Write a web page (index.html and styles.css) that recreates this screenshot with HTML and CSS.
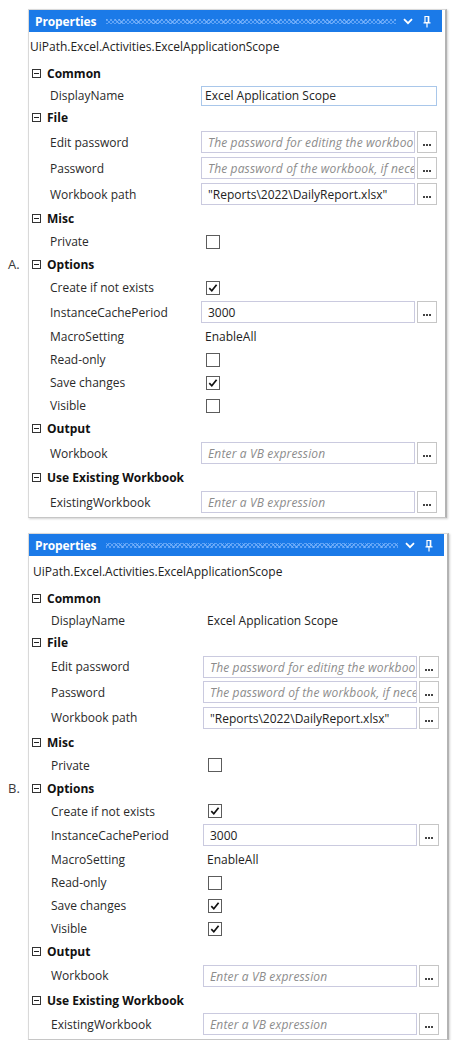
FILE: index.html
```html
<!DOCTYPE html>
<html>
<head>
<meta charset="utf-8">
<link rel="stylesheet" href="styles.css">
</head>
<body>
<div class="page">

  <div class="panel panel-a">
    <div class="titlebar">
      <span class="title">Properties</span>
      <span class="grip"></span>
      <svg class="chev" width="10" height="7" viewBox="0 0 10 7"><path d="M1 1.2 5 5.2 9 1.2" fill="none" stroke="#fff" stroke-width="1.8"/></svg>
      <svg class="pin" width="8" height="13" viewBox="0 0 8 13"><path d="M2 1.5h3.5v6H2z" fill="none" stroke="#fff" stroke-width="1.2"/><path d="M5.5 1v7" stroke="#fff" stroke-width="1.6"/><path d="M0.5 7.8h7M4 8v4.5" stroke="#fff" stroke-width="1.2"/></svg>
    </div>
    <div class="typename">UiPath.Excel.Activities.ExcelApplicationScope</div>

    <div class="cat"><svg class="tog" width="9" height="9" viewBox="0 0 9 9"><rect x="0.5" y="0.5" width="8" height="8" fill="#fff" stroke="#333"/><path d="M2 4.5h5" stroke="#222"/></svg>Common</div>
    <div class="prop short"><span class="lbl">DisplayName</span><div class="val"><div class="field focus">Excel Application Scope</div></div></div>

    <div class="cat"><svg class="tog" width="9" height="9" viewBox="0 0 9 9"><rect x="0.5" y="0.5" width="8" height="8" fill="#fff" stroke="#333"/><path d="M2 4.5h5" stroke="#222"/></svg>File</div>
    <div class="prop in"><span class="lbl">Edit password</span><div class="val"><div class="field ph">The password for editing the workboo</div><div class="btn"><svg width="8" height="2" viewBox="0 0 8 2"><path d="M0 0h2v2H0zM3 0h2v2H3zM6 0h2v2H6z" fill="#444"/></svg></div></div></div>
    <div class="prop in"><span class="lbl">Password</span><div class="val"><div class="field ph">The password of the workbook, if nece</div><div class="btn"><svg width="8" height="2" viewBox="0 0 8 2"><path d="M0 0h2v2H0zM3 0h2v2H3zM6 0h2v2H6z" fill="#444"/></svg></div></div></div>
    <div class="prop in"><span class="lbl">Workbook path</span><div class="val"><div class="field">"Reports\2022\DailyReport.xlsx"</div><div class="btn"><svg width="8" height="2" viewBox="0 0 8 2"><path d="M0 0h2v2H0zM3 0h2v2H3zM6 0h2v2H6z" fill="#444"/></svg></div></div></div>

    <div class="cat"><svg class="tog" width="9" height="9" viewBox="0 0 9 9"><rect x="0.5" y="0.5" width="8" height="8" fill="#fff" stroke="#333"/><path d="M2 4.5h5" stroke="#222"/></svg>Misc</div>
    <div class="prop"><span class="lbl">Private</span><div class="val"><span class="cb"></span></div></div>

    <div class="cat"><span class="marker">A.</span><svg class="tog" width="9" height="9" viewBox="0 0 9 9"><rect x="0.5" y="0.5" width="8" height="8" fill="#fff" stroke="#333"/><path d="M2 4.5h5" stroke="#222"/></svg>Options</div>
    <div class="prop"><span class="lbl">Create if not exists</span><div class="val"><span class="cb"><svg width="12" height="12" viewBox="0 0 12 12"><path d="M2.3 6.2 4.8 8.8 9.6 2.8" fill="none" stroke="#111" stroke-width="1.7"/></svg></span></div></div>
    <div class="prop in"><span class="lbl">InstanceCachePeriod</span><div class="val"><div class="field">3000</div><div class="btn"><svg width="8" height="2" viewBox="0 0 8 2"><path d="M0 0h2v2H0zM3 0h2v2H3zM6 0h2v2H6z" fill="#444"/></svg></div></div></div>
    <div class="prop"><span class="lbl">MacroSetting</span><div class="val"><span class="txt">EnableAll</span></div></div>
    <div class="prop"><span class="lbl">Read-only</span><div class="val"><span class="cb"></span></div></div>
    <div class="prop"><span class="lbl">Save changes</span><div class="val"><span class="cb"><svg width="12" height="12" viewBox="0 0 12 12"><path d="M2.3 6.2 4.8 8.8 9.6 2.8" fill="none" stroke="#111" stroke-width="1.7"/></svg></span></div></div>
    <div class="prop"><span class="lbl">Visible</span><div class="val"><span class="cb"></span></div></div>

    <div class="cat"><svg class="tog" width="9" height="9" viewBox="0 0 9 9"><rect x="0.5" y="0.5" width="8" height="8" fill="#fff" stroke="#333"/><path d="M2 4.5h5" stroke="#222"/></svg>Output</div>
    <div class="prop in"><span class="lbl">Workbook</span><div class="val"><div class="field ph">Enter a VB expression</div><div class="btn"><svg width="8" height="2" viewBox="0 0 8 2"><path d="M0 0h2v2H0zM3 0h2v2H3zM6 0h2v2H6z" fill="#444"/></svg></div></div></div>

    <div class="cat"><svg class="tog" width="9" height="9" viewBox="0 0 9 9"><rect x="0.5" y="0.5" width="8" height="8" fill="#fff" stroke="#333"/><path d="M2 4.5h5" stroke="#222"/></svg>Use Existing Workbook</div>
    <div class="prop in"><span class="lbl">ExistingWorkbook</span><div class="val"><div class="field ph">Enter a VB expression</div><div class="btn"><svg width="8" height="2" viewBox="0 0 8 2"><path d="M0 0h2v2H0zM3 0h2v2H3zM6 0h2v2H6z" fill="#444"/></svg></div></div></div>
  </div>

  <div class="panel panel-b">
    <div class="titlebar">
      <span class="title">Properties</span>
      <span class="grip"></span>
      <svg class="chev" width="10" height="7" viewBox="0 0 10 7"><path d="M1 1.2 5 5.2 9 1.2" fill="none" stroke="#fff" stroke-width="1.8"/></svg>
      <svg class="pin" width="8" height="13" viewBox="0 0 8 13"><path d="M2 1.5h3.5v6H2z" fill="none" stroke="#fff" stroke-width="1.2"/><path d="M5.5 1v7" stroke="#fff" stroke-width="1.6"/><path d="M0.5 7.8h7M4 8v4.5" stroke="#fff" stroke-width="1.2"/></svg>
    </div>
    <div class="typename">UiPath.Excel.Activities.ExcelApplicationScope</div>

    <div class="cat"><svg class="tog" width="9" height="9" viewBox="0 0 9 9"><rect x="0.5" y="0.5" width="8" height="8" fill="#fff" stroke="#333"/><path d="M2 4.5h5" stroke="#222"/></svg>Common</div>
    <div class="prop short"><span class="lbl">DisplayName</span><div class="val"><span class="txt">Excel Application Scope</span></div></div>

    <div class="cat"><svg class="tog" width="9" height="9" viewBox="0 0 9 9"><rect x="0.5" y="0.5" width="8" height="8" fill="#fff" stroke="#333"/><path d="M2 4.5h5" stroke="#222"/></svg>File</div>
    <div class="prop in"><span class="lbl">Edit password</span><div class="val"><div class="field ph">The password for editing the workboo</div><div class="btn"><svg width="8" height="2" viewBox="0 0 8 2"><path d="M0 0h2v2H0zM3 0h2v2H3zM6 0h2v2H6z" fill="#444"/></svg></div></div></div>
    <div class="prop in"><span class="lbl">Password</span><div class="val"><div class="field ph">The password of the workbook, if nece</div><div class="btn"><svg width="8" height="2" viewBox="0 0 8 2"><path d="M0 0h2v2H0zM3 0h2v2H3zM6 0h2v2H6z" fill="#444"/></svg></div></div></div>
    <div class="prop in"><span class="lbl">Workbook path</span><div class="val"><div class="field">"Reports\2022\DailyReport.xlsx"</div><div class="btn"><svg width="8" height="2" viewBox="0 0 8 2"><path d="M0 0h2v2H0zM3 0h2v2H3zM6 0h2v2H6z" fill="#444"/></svg></div></div></div>

    <div class="cat"><svg class="tog" width="9" height="9" viewBox="0 0 9 9"><rect x="0.5" y="0.5" width="8" height="8" fill="#fff" stroke="#333"/><path d="M2 4.5h5" stroke="#222"/></svg>Misc</div>
    <div class="prop"><span class="lbl">Private</span><div class="val"><span class="cb"></span></div></div>

    <div class="cat"><span class="marker">B.</span><svg class="tog" width="9" height="9" viewBox="0 0 9 9"><rect x="0.5" y="0.5" width="8" height="8" fill="#fff" stroke="#333"/><path d="M2 4.5h5" stroke="#222"/></svg>Options</div>
    <div class="prop"><span class="lbl">Create if not exists</span><div class="val"><span class="cb"><svg width="12" height="12" viewBox="0 0 12 12"><path d="M2.3 6.2 4.8 8.8 9.6 2.8" fill="none" stroke="#111" stroke-width="1.7"/></svg></span></div></div>
    <div class="prop in"><span class="lbl">InstanceCachePeriod</span><div class="val"><div class="field">3000</div><div class="btn"><svg width="8" height="2" viewBox="0 0 8 2"><path d="M0 0h2v2H0zM3 0h2v2H3zM6 0h2v2H6z" fill="#444"/></svg></div></div></div>
    <div class="prop"><span class="lbl">MacroSetting</span><div class="val"><span class="txt">EnableAll</span></div></div>
    <div class="prop"><span class="lbl">Read-only</span><div class="val"><span class="cb"></span></div></div>
    <div class="prop"><span class="lbl">Save changes</span><div class="val"><span class="cb"><svg width="12" height="12" viewBox="0 0 12 12"><path d="M2.3 6.2 4.8 8.8 9.6 2.8" fill="none" stroke="#111" stroke-width="1.7"/></svg></span></div></div>
    <div class="prop"><span class="lbl">Visible</span><div class="val"><span class="cb"><svg width="12" height="12" viewBox="0 0 12 12"><path d="M2.3 6.2 4.8 8.8 9.6 2.8" fill="none" stroke="#111" stroke-width="1.7"/></svg></span></div></div>

    <div class="cat"><svg class="tog" width="9" height="9" viewBox="0 0 9 9"><rect x="0.5" y="0.5" width="8" height="8" fill="#fff" stroke="#333"/><path d="M2 4.5h5" stroke="#222"/></svg>Output</div>
    <div class="prop in"><span class="lbl">Workbook</span><div class="val"><div class="field ph">Enter a VB expression</div><div class="btn"><svg width="8" height="2" viewBox="0 0 8 2"><path d="M0 0h2v2H0zM3 0h2v2H3zM6 0h2v2H6z" fill="#444"/></svg></div></div></div>

    <div class="cat"><svg class="tog" width="9" height="9" viewBox="0 0 9 9"><rect x="0.5" y="0.5" width="8" height="8" fill="#fff" stroke="#333"/><path d="M2 4.5h5" stroke="#222"/></svg>Use Existing Workbook</div>
    <div class="prop in"><span class="lbl">ExistingWorkbook</span><div class="val"><div class="field ph">Enter a VB expression</div><div class="btn"><svg width="8" height="2" viewBox="0 0 8 2"><path d="M0 0h2v2H0zM3 0h2v2H3zM6 0h2v2H6z" fill="#444"/></svg></div></div></div>
  </div>

</div>
</body>
</html>
```

FILE: styles.css
```css
html, body {
  margin: 0;
  background: #ffffff;
}
body {
  font-family: "Open Sans", "Noto Sans", sans-serif;
  font-size: 12px;
  color: #2a2a2a;
}
.page {
  padding: 9px 0 0 28px;
  display: flex;
  flex-direction: column;
  gap: 15px;
}
.panel {
  width: 419px;
  box-sizing: border-box;
  border: 1px solid #d9d9d9;
  border-right: 2px solid #b3b3b3;
  border-bottom-color: #c6c6c6;
  box-shadow: 1px 1px 2px rgba(0, 0, 0, 0.18);
  padding-bottom: 2px;
  background: #fff;
}
.panel-b {
  width: 421px;
}
.titlebar {
  height: 22px;
  margin-right: 3px;
  background: #1b7ae8;
  display: flex;
  align-items: center;
  padding-left: 6px;
  color: #fff;
}
.title {
  font-weight: 700;
  font-size: 12px;
  letter-spacing: -0.1px;
}
.grip {
  flex: 1;
  height: 5px;
  margin: 1px 7px 0 10px;
  background-image:
    repeating-linear-gradient(45deg, rgba(140, 190, 255, 0.6) 0 1px, transparent 1px 3px),
    repeating-linear-gradient(-45deg, rgba(140, 190, 255, 0.6) 0 1px, transparent 1px 3px);
}
.chev {
  margin-right: 10px;
}
.pin {
  margin-right: 11px;
}
.typename {
  height: 30px;
  line-height: 30px;
  padding-left: 1px;
  color: #222;
}
.panel-b .typename {
  height: 31px;
  line-height: 31px;
  padding-left: 4px;
}
.cat {
  position: relative;
  height: 23px;
  display: flex;
  align-items: center;
  gap: 6px;
  padding-left: 3px;
  font-weight: 700;
  color: #111;
}
.marker {
  position: absolute;
  left: -21px;
  top: 2px;
  font-weight: 400;
  font-size: 13px;
  color: #3a3a3a;
}
.prop {
  display: grid;
  grid-template-columns: 151px 1fr;
  align-items: center;
  height: 23px;
  padding: 0 8px 0 21px;
}
.panel-b .prop {
  grid-template-columns: 152px 1fr;
  padding: 0 8px 0 22px;
}
.prop.in {
  height: 26px;
}
.panel-b .prop.in {
  height: 25.5px;
}
.prop.short {
  height: 21px;
}
.lbl {
  white-space: nowrap;
  color: #2a2a2a;
}
.val {
  display: flex;
  align-items: center;
  gap: 2px;
  min-width: 0;
}
.field {
  flex: 1;
  min-width: 0;
  height: 22px;
  box-sizing: border-box;
  border: 1px solid #cacadf;
  padding: 0 4px 0 6px;
  line-height: 21px;
  white-space: nowrap;
  overflow: hidden;
  color: #222;
}
.field.ph {
  font-style: italic;
  color: #8c8c8c;
  letter-spacing: 0.15px;
}
.field.focus {
  height: 20px;
  line-height: 18px;
  padding: 0 3px;
  border-color: #a9c7ea;
}
.btn {
  width: 20px;
  height: 22px;
  box-sizing: border-box;
  border: 1px solid #c6c6c6;
  display: flex;
  align-items: flex-end;
  justify-content: center;
  padding-bottom: 6px;
}
.btn svg {
  display: block;
}
.cb {
  width: 14px;
  height: 14px;
  box-sizing: border-box;
  border: 1px solid #5c5c5c;
  margin-left: 5px;
  display: flex;
  align-items: center;
  justify-content: center;
}
.cb svg {
  display: block;
}
.txt {
  padding-left: 4px;
  color: #222;
  white-space: nowrap;
}
```
